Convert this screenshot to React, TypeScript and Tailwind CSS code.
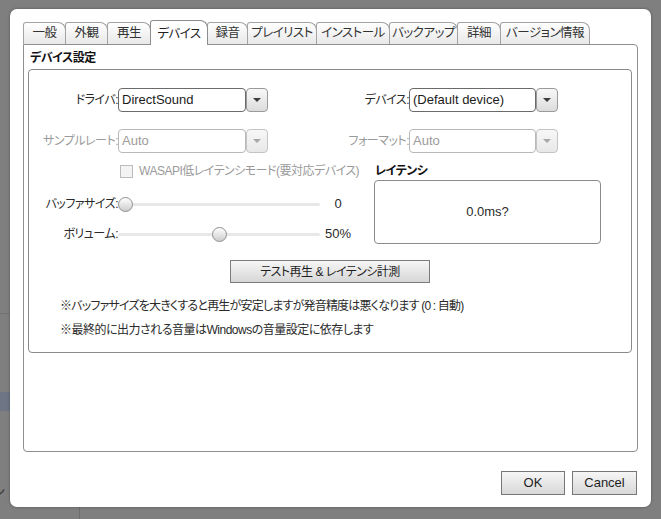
import React from "react";

const tabs = [
  { label: "一般", w: "w-[43px]" },
  { label: "外観", w: "w-[43px]" },
  { label: "再生", w: "w-[44px]" },
  { label: "デバイス", w: "w-[58px]", active: true },
  { label: "録音", w: "w-[41px]" },
  { label: "プレイリスト", w: "w-[70px]" },
  { label: "インストール", w: "w-[74px]" },
  { label: "バックアップ", w: "w-[69px]" },
  { label: "詳細", w: "w-[44px]" },
  { label: "バージョン情報", w: "w-[90px]" },
];

function Arrow({ disabled }: { disabled?: boolean }) {
  return (
    <svg width="8" height="4" viewBox="0 0 8 4">
      <path d="M0 0h8L4 4z" fill={disabled ? "#a8a8a8" : "#3c3c3c"} />
    </svg>
  );
}

function Select({ value, disabled, className }: { value: string; disabled?: boolean; className: string }) {
  return (
    <div className={`flex h-[24px] ${className}`}>
      <div
        className={`flex flex-1 items-center rounded-[4px] border bg-white pl-[3px] text-[13px] tracking-normal ${
          disabled ? "border-[#b8b8b8] text-[#9b9b9b]" : "border-[#6a6a6a] text-[#1b1b1b]"
        }`}
      >
        {value}
      </div>
      <div
        className={`flex w-[22px] items-center justify-center rounded-[4px] border bg-gradient-to-b ${
          disabled ? "border-[#c4c4c4] from-[#f7f7f7] to-[#e8e8e8]" : "border-[#9a9a9a] from-[#f8f8f8] to-[#dcdcdc]"
        }`}
      >
        <Arrow disabled={disabled} />
      </div>
    </div>
  );
}

function Slider({ value }: { value: number }) {
  // track 202px, thumb 15px
  const left = Math.round((202 - 15) * value);
  return (
    <div className="relative flex h-[16px] w-[202px] items-center">
      <div className="h-[3px] w-full rounded-full bg-[#e8e8e8]" />
      <div
        className="absolute top-[0.5px] h-[15px] w-[15px] rounded-full border border-[#8f8f8f] bg-gradient-to-b from-white to-[#cdcdcd]"
        style={{ left }}
      />
    </div>
  );
}

export default function App() {
  return (
    <div className="relative h-[519px] w-[661px] overflow-hidden bg-[#7f7f7f] pl-[10px] pt-[9px] font-['Liberation_Sans','Noto_Sans_CJK_JP',sans-serif] text-[12px] tracking-[-0.5px] text-[#2a2a2a] [font-feature-settings:'palt']">
      {/* what is left of the window behind */}
      <div className="absolute left-0 top-[313px] h-px w-[10px] bg-[#747474]" />
      <div className="absolute left-0 top-[392px] h-[19px] w-[10px] bg-[#6e7686]" />
      <div className="absolute left-[-6px] top-[486px] text-[12px] leading-none text-[#333]">ン</div>
      <div className="absolute left-[79px] top-[507px] h-[12px] w-px bg-[#6e6e6e]" />

      <div className="relative h-[498px] w-[641px] rounded-[7px] bg-white px-[13px] pt-[11px] shadow-[0_0_3px_rgba(0,0,0,0.35)]">
        {/* Tabs */}
        <div className="flex h-[24px] items-end">
          {tabs.map((t, i) => (
            <div
              key={t.label}
              className={`flex items-center justify-center rounded-tl-[3px] rounded-tr-[8px] border border-b-0 text-[12.5px] ${t.w} ${
                i > 0 ? "ml-[-1px]" : ""
              } ${
                t.active
                  ? "relative z-10 mb-[-1px] h-[25px] border-[#8c8c8c] bg-white pt-[2px] text-[#1e1e1e]"
                  : "h-[22px] border-[#a3a3a3] bg-gradient-to-b from-white to-[#e8e8e8] text-[#333]"
              }`}
            >
              {t.label}
            </div>
          ))}
        </div>

        {/* Tab panel */}
        <div className="h-[408px] rounded-[4px] rounded-tl-none border border-[#8e8e8e] pl-[4px] pt-[5px]">
          <div className="h-[16px] pl-[2px] font-bold leading-[16px] text-[#111]">デバイス設定</div>

          <div className="mt-[3px] h-[284px] w-[604px] rounded-[4px] border border-[#8a8a8a] pt-[18px]">
            {/* driver / device */}
            <div className="flex h-[24px] items-center">
              <div className="w-[89px] text-right">ドライバ:</div>
              <Select value="DirectSound" className="w-[150px]" />
              <div className="w-[141px] text-right">デバイス:</div>
              <Select value="(Default device)" className="w-[149px]" />
            </div>

            {/* sample rate / format */}
            <div className="mt-[17px] flex h-[24px] items-center text-[#9a9a9a]">
              <div className="w-[89px] text-right">サンプルレート:</div>
              <Select value="Auto" disabled className="w-[150px]" />
              <div className="w-[141px] text-right">フォーマット:</div>
              <Select value="Auto" disabled className="w-[149px]" />
            </div>

            <div className="flex">
              <div className="w-[345px]">
                <div className="mt-[11px] flex h-[14px] items-center whitespace-nowrap pl-[91px] text-[#9a9a9a]">
                  <div className="h-[13px] w-[13px] shrink-0 border border-[#bcbcbc] bg-[#f3f3f3]" />
                  <span className="ml-[6px]">WASAPI低レイテンシモード(要対応デバイス)</span>
                </div>

                <div className="mt-[18px] flex h-[16px] items-center">
                  <div className="w-[89px] text-right">バッファサイズ:</div>
                  <Slider value={0} />
                  <div className="w-[36px] text-center text-[13px] tracking-normal">0</div>
                </div>

                <div className="mt-[14px] flex h-[16px] items-center">
                  <div className="w-[89px] text-right">ボリューム:</div>
                  <Slider value={0.5} />
                  <div className="w-[36px] text-center text-[13px] tracking-normal">50%</div>
                </div>
              </div>

              <div>
                <div className="mt-[10px] h-[16px] pl-[1px] font-bold leading-[16px] text-[#111]">レイテンシ</div>
                <div className="mt-px flex h-[64px] w-[227px] items-center justify-center rounded-[4px] border border-[#8c8c8c] text-[13px] tracking-normal">
                  0.0ms?
                </div>
              </div>
            </div>

            <div className="mx-auto mt-[16px] flex h-[23px] w-[200px] items-center justify-center border border-[#7c7c7c] bg-gradient-to-b from-[#f6f6f6] to-[#d6d6d6] text-[#1e1e1e]">
              テスト再生 &amp; レイテンシ計測
            </div>

            <div className="mt-[15px] h-[16px] whitespace-nowrap pl-[31px] leading-[16px] tracking-[-0.8px]">
              ※バッファサイズを大きくすると再生が安定しますが発音精度は悪くなります (0 : 自動)
            </div>
            <div className="mt-[8px] h-[16px] whitespace-nowrap pl-[31px] leading-[16px] tracking-[-0.5px]">
              ※最終的に出力される音量はWindowsの音量設定に依存します
            </div>
          </div>
        </div>

        {/* Footer buttons */}
        <div className="mr-[1px] mt-[19px] flex justify-end gap-[7px]">
          <div className="flex h-[24px] w-[64px] items-center justify-center border border-[#777] bg-gradient-to-b from-[#f6f6f6] to-[#d8d8d8] text-[13px] tracking-normal text-[#1e1e1e]">
            OK
          </div>
          <div className="flex h-[24px] w-[65px] items-center justify-center border border-[#777] bg-gradient-to-b from-[#f6f6f6] to-[#d8d8d8] text-[13px] tracking-normal text-[#1e1e1e]">
            Cancel
          </div>
        </div>
      </div>
    </div>
  );
}
